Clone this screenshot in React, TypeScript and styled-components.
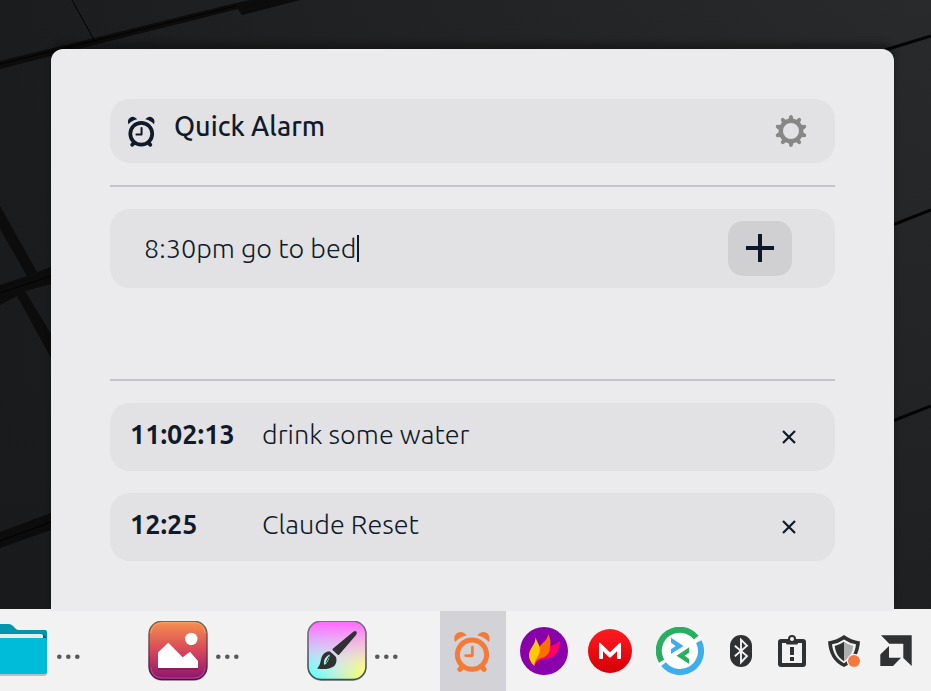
import React, { useState } from "react";
import styled, { createGlobalStyle } from "styled-components";

const ink = "#101a2b";
const steel = "#303132";

const GlobalStyle = createGlobalStyle`
  *, *::before, *::after { box-sizing: border-box; }
  body {
    margin: 0;
    overflow: hidden;
    color: ${ink};
    font-family: Ubuntu, "Noto Sans", "Open Sans", sans-serif;
    font-size: 27px;
    line-height: 36px;
  }
  button, input { font: inherit; color: inherit; }
  button { padding: 0; border: 0; background: none; cursor: pointer; }
  svg { display: block; flex: none; }
`;

const Screen = styled.div`
  display: grid;
  grid-template: minmax(0, 1fr) auto / minmax(0, 1fr);
  min-height: 100vh;
  background: #1c1d1f;
`;

const Wallpaper = styled.svg`
  grid-area: 1 / 1;
  contain: size;
  width: 100%;
  height: 100%;
`;

const Panel = styled.main`
  grid-area: 1 / 1;
  z-index: 1;
  display: flex;
  flex-direction: column;
  gap: 22px;
  margin: 49px 37px -2px 51px;
  padding: 50px 59px;
  border-radius: 12px 12px 0 0;
  background: #ebebed;
  box-shadow: 0 -6px 6px rgba(0, 0, 0, 0.3);
`;

const Card = styled.div`
  display: flex;
  align-items: center;
  border-radius: 20px;
  background: #e2e2e4;
`;

const Header = styled(Card).attrs({ as: "header" })`
  gap: 14px;
  height: 64px;
  padding: 0 28px 0 14px;
`;

const Title = styled.h1`
  flex: 1;
  margin: 0;
  padding-bottom: 10px;
  font-size: 27px;
  font-weight: 500;
`;

const Divider = styled.hr`
  width: 100%;
  height: 2px;
  margin: 0;
  border: 0;
  background: #c3c3c9;
`;

const EntryForm = styled(Card).attrs({ as: "form" })`
  height: 79px;
  margin-bottom: 69px;
  padding: 0 43px 0 34px;
`;

const EntryField = styled.label`
  display: flex;
  flex: 1;
  gap: 1px;
  align-items: center;
  min-width: 0;
`;

const EntryInput = styled.input`
  field-sizing: content;
  min-width: 1px;
  max-width: 100%;
  padding: 0 0 2px;
  border: 0;
  outline: 0;
  background: none;
  font-weight: 300;
  caret-color: transparent;
`;

const Caret = styled.span`
  width: 2px;
  height: 27px;
  background: ${ink};
`;

const AddButton = styled.button`
  display: grid;
  place-items: center;
  width: 64px;
  height: 55px;
  padding-bottom: 1px;
  border-radius: 15px;
  background: #d0d0d2;
`;

const AlarmList = styled.ul`
  display: flex;
  flex-direction: column;
  gap: 22px;
  margin: 0;
  padding: 0;
  list-style: none;
`;

const AlarmRow = styled(Card).attrs({ as: "li" })`
  height: 68px;
  padding: 0 38px 0 20px;
`;

const AlarmTime = styled.time`
  width: 132px;
  padding-bottom: 6px;
  font-weight: 700;
`;

const AlarmLabel = styled.span`
  flex: 1;
  padding-bottom: 6px;
  font-weight: 300;
`;

const Taskbar = styled.footer`
  grid-area: 2 / 1;
  display: flex;
  justify-content: space-between;
  height: 82px;
  padding: 2px 19px 0 0;
  background: #f2f2f2;
`;

const TaskList = styled.nav`
  display: flex;
  align-items: center;
  gap: 67px;
  margin-left: -11px;
`;

const Task = styled.button`
  display: flex;
  gap: 8px;
`;

const Tray = styled.div`
  display: flex;
  align-items: center;
  gap: 20px;
`;

const TrayButton = styled.button<{ $active?: boolean }>`
  display: grid;
  place-items: center;
  ${(p) => p.$active && "width: 66px; height: 100%; margin-right: -6px; background: #d3d2d7;"}
`;

const AlarmClock = ({ size }: { size: number }) => (
  <svg width={size} height={size} viewBox="0 0 48 48" fill="currentColor" stroke="none" aria-hidden="true">
    <circle cx="23" cy="27.7" r="14.6" fill="none" stroke="currentColor" strokeWidth="5" />
    <path d="M6.1 15C3.4 9.5 8 4 13 5.2C15.2 5.7 16.8 7 17.6 8.4C12.5 9.6 8.6 11.8 6.1 15Z" />
    <path d="M39.9 15C42.6 9.5 38 4 33 5.2C30.8 5.7 29.2 7 28.4 8.4C33.5 9.6 37.4 11.8 39.9 15Z" />
    <path d="M13.5 39.5L11 42.3M32.5 39.5L35 42.3" stroke="currentColor" strokeWidth="5.2" strokeLinecap="round" />
    <path d="M23.4 20V28.6H16.6" fill="none" stroke="currentColor" strokeWidth="2.7" strokeLinecap="round" strokeLinejoin="round" />
  </svg>
);

const Gear = () => (
  <svg width="32" height="32" viewBox="-16 -16 32 32" aria-hidden="true">
    <circle r="10.2" fill="none" stroke="#878787" strokeWidth="4.4" />
    {Array.from({ length: 10 }, (_, i) => (
      <path key={i} transform={`rotate(${i * 36})`} d="M-3.8 -11C-2.2 -11.6 -2 -12.6 -1.9 -14.2Q-1.6 -15.9 0 -15.9Q1.6 -15.9 1.9 -14.2C2 -12.6 2.2 -11.6 3.8 -11Z" fill="#878787" />
    ))}
  </svg>
);

const Plus = () => (
  <svg width="28" height="28" viewBox="0 0 28 28" aria-hidden="true">
    <path d="M14 0V28M0 14H28" stroke="#0e162b" strokeWidth="4" />
  </svg>
);

const Cross = () => (
  <svg width="16" height="16" viewBox="0 0 16 16" aria-hidden="true">
    <path d="M2 2L14 14M14 2L2 14" stroke={ink} strokeWidth="2.2" />
  </svg>
);

const Dots = () => (
  <svg width="24" height="60" viewBox="0 0 24 60" fill="#585858" aria-hidden="true">
    <circle cx="2.3" cy="35.8" r="2.3" />
    <circle cx="11.3" cy="35.8" r="2.3" />
    <circle cx="20.3" cy="35.8" r="2.3" />
  </svg>
);

const FolderIcon = () => (
  <svg width="60" height="60" viewBox="0 0 60 60" aria-hidden="true">
    <path d="M2 50H58V52Q58 55 55 55H2Z" fill="#bdbdbf" />
    <path d="M2 3H20Q22 3 24 5L27 8Q28 9 30 9H56Q58 9 58 11V30H2Z" fill="#0097ae" />
    <path d="M2 13H52Q54 13 54 15V20H2Z" fill="#e7eced" />
    <path d="M54 13L58 17H54Z" fill="#006c7c" />
    <path d="M2 17H56Q58 17 58 19V51Q58 53 56 53H2Z" fill="#00bcd8" />
  </svg>
);

const PhotosIcon = () => (
  <svg width="60" height="60" viewBox="0 0 60 60" aria-hidden="true">
    <defs>
      <linearGradient id="sunset" x2="0" y2="1">
        <stop stopColor="#f5924e" />
        <stop offset=".5" stopColor="#d8475a" />
        <stop offset="1" stopColor="#8b1470" />
      </linearGradient>
      <linearGradient id="sunsetRim" x2="0" y2="1">
        <stop stopColor="#7c6452" />
        <stop offset="1" stopColor="#4b1240" />
      </linearGradient>
    </defs>
    <rect x="1" y="2" width="58" height="58" rx="13" fill="#bbb" />
    <rect x="1" y="0.2" width="58" height="58.4" rx="13" fill="url(#sunset)" stroke="url(#sunsetRim)" strokeWidth="1.4" />
    <path d="M3 12Q4 1.7 14 1.7H46Q56 1.7 57 12" fill="none" stroke="#ffad68" strokeOpacity=".7" />
    <path d="M3 47Q4 57 14 57H46Q56 57 57 47" fill="none" stroke="#ab4590" strokeWidth="1.2" />
    <path d="M10 33L20.3 23.5L34.7 38L42 32.5L50 42V49H10Z" fill="#7e1550" opacity=".6" />
    <path d="M10 31.5L20.3 21.7L34.7 36.3L42 30.7L50 40V47H10Z" fill="#fff" />
    <circle cx="43.3" cy="18.8" r="6.2" fill="#a83e42" opacity=".5" />
    <circle cx="43.3" cy="18" r="6.2" fill="#fff" />
  </svg>
);

const PaintIcon = () => (
  <svg width="60" height="60" viewBox="0 0 60 60" aria-hidden="true">
    <defs>
      <linearGradient id="paintSide">
        <stop stopColor="#45ffff" />
        <stop offset=".5" stopColor="#b5f2d5" />
        <stop offset="1" stopColor="#ffff50" />
      </linearGradient>
      <linearGradient id="paintTop" x2="0" y2="1">
        <stop offset=".05" stopColor="#ff70ff" />
        <stop offset=".5" stopColor="#eec0f5" stopOpacity=".75" />
        <stop offset="1" stopColor="#fff" stopOpacity="0" />
      </linearGradient>
      <linearGradient id="paintRim" x2="0" y2="1">
        <stop stopColor="#806f82" />
        <stop offset="1" stopColor="#3c4e4d" />
      </linearGradient>
    </defs>
    <rect x="1" y="2" width="58" height="58" rx="13" fill="#c4c4c4" />
    <rect x="1" y="0.2" width="58" height="58.4" rx="13" fill="url(#paintSide)" />
    <rect x="1" y="0.2" width="58" height="58.4" rx="13" fill="url(#paintTop)" stroke="url(#paintRim)" strokeWidth="1.6" />
    <path d="M46.3 10.8Q48 9.3 49.4 10.6Q50.6 12 49 13.9L32.3 33.6Q31.5 34.6 30.4 33.6L25.8 29.3Q24.8 28.3 26 27.5Z" fill="#303133" />
    <path d="M10 47.5C15 43 12.5 37 17 32.5Q20 30.2 22.5 30.2Q27 33.4 29 36C30 39.5 29.6 43 27 45.2C22 48.6 16 48.5 10 47.5Z" fill="#303133" />
    <path d="M17.3 44C15.8 40 18.5 35 22.8 33.5C22.6 38 20.5 42 17.3 44Z" fill="#a9f3e0" />
    <path d="M19 41.5L22 35.5" stroke="#303133" strokeWidth="1" />
  </svg>
);

const FlameIcon = () => (
  <svg width="48" height="48" viewBox="0 0 48 48" aria-hidden="true">
    <circle cx="24" cy="24" r="24" fill="#8900ab" />
    <path d="M40 13.7C40.5 20 37.5 26 33 29.5C27 33 19 30.5 14.3 38.7C14.5 32 18 27 24 23C29 19 35 18.5 40 13.7Z" fill="#ff0069" />
    <path d="M28.3 7C30.5 12 31 15 30.1 19.5C30 27 26 30 20.5 31.3C17 32.2 15 35 14.3 38.7C14 30 17 24 19 20.5C20.5 17 27.5 14 28.3 7Z" fill="#ff6f00" />
    <path d="M15.4 10C16.6 15 20 17.5 19.9 23C19.5 29 14.5 31.5 14.3 39C10.5 35.5 8.3 30.5 9.3 26C10.5 20.5 16 17 15.4 10Z" fill="#ffcb00" />
  </svg>
);

const CloudDriveIcon = () => (
  <svg width="48" height="48" viewBox="0 0 48 48" aria-hidden="true">
    <defs>
      <linearGradient id="driveRed" x2="0" y2="1">
        <stop stopColor="#ff1b1f" />
        <stop offset="1" stopColor="#d40008" />
      </linearGradient>
    </defs>
    <circle cx="22" cy="24" r="22" fill="url(#driveRed)" />
    <path d="M11 16.4Q11 15.3 12.2 15.8L22 25.2L31.8 15.8Q33 15.3 33 16.4V31Q33 32 32 32H30Q29 32 29 31V24.2L22.8 30.2Q22 30.8 21.2 30.2L15 24.2V31Q15 32 14 32H12Q11 32 11 31Z" fill="#fff" />
  </svg>
);

const SyncIcon = () => (
  <svg width="48" height="48" viewBox="0 0 48 48" aria-hidden="true">
    <circle cx="24" cy="24" r="19" fill="#fff" />
    <g fill="none" strokeWidth="6">
      <path d="M5.6 34.2A21 21 0 0 1 40.2 10.6" stroke="#28ae61" />
      <path d="M42.8 14.6A21 21 0 0 1 7.6 37.1" stroke="#3daee9" />
      <path d="M2.7 38L9.7 33M38 14.8L45.2 9.8" stroke="#fff" strokeWidth="2.4" />
    </g>
    <path d="M15 10.7L27.5 19L15 27V22.2L19.7 19L15 15.7Z" fill="#3daee9" />
    <path d="M33.2 20.3L20.5 28.7L33.2 37V32L28.8 28.7L33.2 25.5Z" fill="#28ae61" />
  </svg>
);

const BluetoothIcon = () => (
  <svg width="32" height="32" viewBox="0 0 32 32" aria-hidden="true">
    <rect x="6" y="0" width="22" height="32" rx="11" fill={steel} />
    <path d="M10.8 10.8L23 21L17 27.3V4.7L23 10.8L10.8 21.2" fill="none" stroke="#f2f2f2" strokeWidth="1.9" />
  </svg>
);

const ClipboardIcon = () => (
  <svg width="32" height="32" viewBox="0 0 32 32" aria-hidden="true">
    <rect x="4" y="6" width="24" height="24" rx="1" fill="none" stroke={steel} strokeWidth="4" />
    <path d="M10 4H22V8Q22 9.5 20.5 9.5H11.5Q10 9.5 10 8Z" fill={steel} />
    <circle cx="16" cy="4" r="3" fill="#f2f2f2" stroke={steel} strokeWidth="2" />
    <path d="M14 12H18V20H14ZM14 22H18V26H14Z" fill={steel} />
  </svg>
);

const ShieldIcon = () => (
  <svg width="32" height="32" viewBox="0 0 32 32" aria-hidden="true">
    <path d="M16 0Q23 5 32 6.5C31 18 27 27 16 32C5 27 1 18 0 6.5Q9 5 16 0Z" fill={steel} />
    <path d="M16 4.4Q21.5 8.2 28 9.3C27 18 23.5 24.2 16 28.2C8.5 24.2 5 18 4 9.3Q10.5 8.2 16 4.4Z" fill="#f2f2f2" />
    <path d="M16 6.7Q11.5 9.9 6.7 11C7.6 18 10.5 22.8 16 26.2Z" fill={steel} />
    <path d="M16 6.7Q20.5 9.9 25.3 11C24.4 18 21.5 22.8 16 26.2Z" fill="#aeaeae" />
    <circle cx="26" cy="26" r="7.2" fill="#f2f2f2" />
    <circle cx="26" cy="26" r="6" fill="#f67a40" />
  </svg>
);

const ChipIcon = () => (
  <svg width="32" height="32" viewBox="0 0 32 32" fill={steel} aria-hidden="true">
    <path d="M1 0.3H31.7V31L23.3 23V8.7H9.3Z" />
    <path d="M9 11V22.7H21L13 31H0.3V19.5Z" />
  </svg>
);

const WallpaperArt = () => (
  <Wallpaper viewBox="0 0 931 609" preserveAspectRatio="none" aria-hidden="true">
    <defs>
      <linearGradient id="slate" x2="1" y2="0">
        <stop stopColor="#1b1c1e" />
        <stop offset="1" stopColor="#282a2b" />
      </linearGradient>
      <linearGradient id="dusk" x2="0" y2="1">
        <stop stopColor="#18191b" stopOpacity="0" />
        <stop offset="1" stopColor="#18191b" stopOpacity=".6" />
      </linearGradient>
    </defs>
    <rect width="931" height="609" fill="url(#slate)" />
    <rect width="931" height="609" fill="url(#dusk)" />
    <g fill="#0c0c0d">
      <path d="M0 61L94 38L236 3L250 0H300L242 15L238 9L94 45L0 69Z" />
      <path d="M0 206L37 272L51 267V284L25 291L51 334V358L17 296L0 305V285L27 276L0 229Z" />
      <path d="M0 532L51 513V530L0 548Z" />
    </g>
    <path d="M0 64L94 41L236 6M72 0L94 40M0 293L51 276M0 541L51 522" fill="none" stroke="#020202" />
    <path d="M885 50L931 36M890 226L931 210M890 422L931 406" fill="none" stroke="#050506" strokeWidth="3" />
  </Wallpaper>
);

const initialAlarms = [
  { time: "11:02:13", label: "drink some water" },
  { time: "12:25", label: "Claude Reset" },
];

const tasks = [
  { name: "Files", icon: <FolderIcon /> },
  { name: "Photos", icon: <PhotosIcon /> },
  { name: "Paint", icon: <PaintIcon /> },
];

const trayItems = [
  { name: "Screenshot tool", icon: <FlameIcon /> },
  { name: "Cloud drive", icon: <CloudDriveIcon /> },
  { name: "Sync", icon: <SyncIcon /> },
  { name: "Bluetooth", icon: <BluetoothIcon /> },
  { name: "Clipboard", icon: <ClipboardIcon /> },
  { name: "Security", icon: <ShieldIcon /> },
  { name: "Graphics", icon: <ChipIcon /> },
];

const AlarmMark = styled.span`
  color: #f47b37;
`;

export default function App() {
  const [entry, setEntry] = useState("8:30pm go to bed");
  const [alarms, setAlarms] = useState(initialAlarms);

  const addAlarm = (event: React.FormEvent) => {
    event.preventDefault();
    const [time, ...words] = entry.trim().split(" ");
    if (!time) return;
    setAlarms([...alarms, { time, label: words.join(" ") }]);
    setEntry("");
  };

  return (
    <>
      <GlobalStyle />
      <Screen>
        <WallpaperArt />
        <Panel>
          <Header>
            <AlarmClock size={36} />
            <Title>Quick Alarm</Title>
            <button type="button" aria-label="Settings"><Gear /></button>
          </Header>
          <Divider />
          <EntryForm onSubmit={addAlarm}>
            <EntryField>
              <EntryInput aria-label="New alarm" value={entry} onChange={(e) => setEntry(e.target.value)} />
              <Caret />
            </EntryField>
            <AddButton type="submit" aria-label="Add alarm"><Plus /></AddButton>
          </EntryForm>
          <Divider />
          <AlarmList>
            {alarms.map((alarm, index) => (
              <AlarmRow key={index}>
                <AlarmTime>{alarm.time}</AlarmTime>
                <AlarmLabel>{alarm.label}</AlarmLabel>
                <button type="button" aria-label={`Remove ${alarm.label}`} onClick={() => setAlarms(alarms.filter((a) => a !== alarm))}>
                  <Cross />
                </button>
              </AlarmRow>
            ))}
          </AlarmList>
        </Panel>
        <Taskbar>
          <TaskList aria-label="Open applications">
            {tasks.map((task) => (
              <Task key={task.name} type="button" aria-label={task.name}>
                {task.icon}
                <Dots />
              </Task>
            ))}
          </TaskList>
          <Tray>
            <TrayButton type="button" aria-label="Quick Alarm" $active>
              <AlarmMark><AlarmClock size={48} /></AlarmMark>
            </TrayButton>
            {trayItems.map((item) => (
              <TrayButton key={item.name} type="button" aria-label={item.name}>{item.icon}</TrayButton>
            ))}
          </Tray>
        </Taskbar>
      </Screen>
    </>
  );
}
